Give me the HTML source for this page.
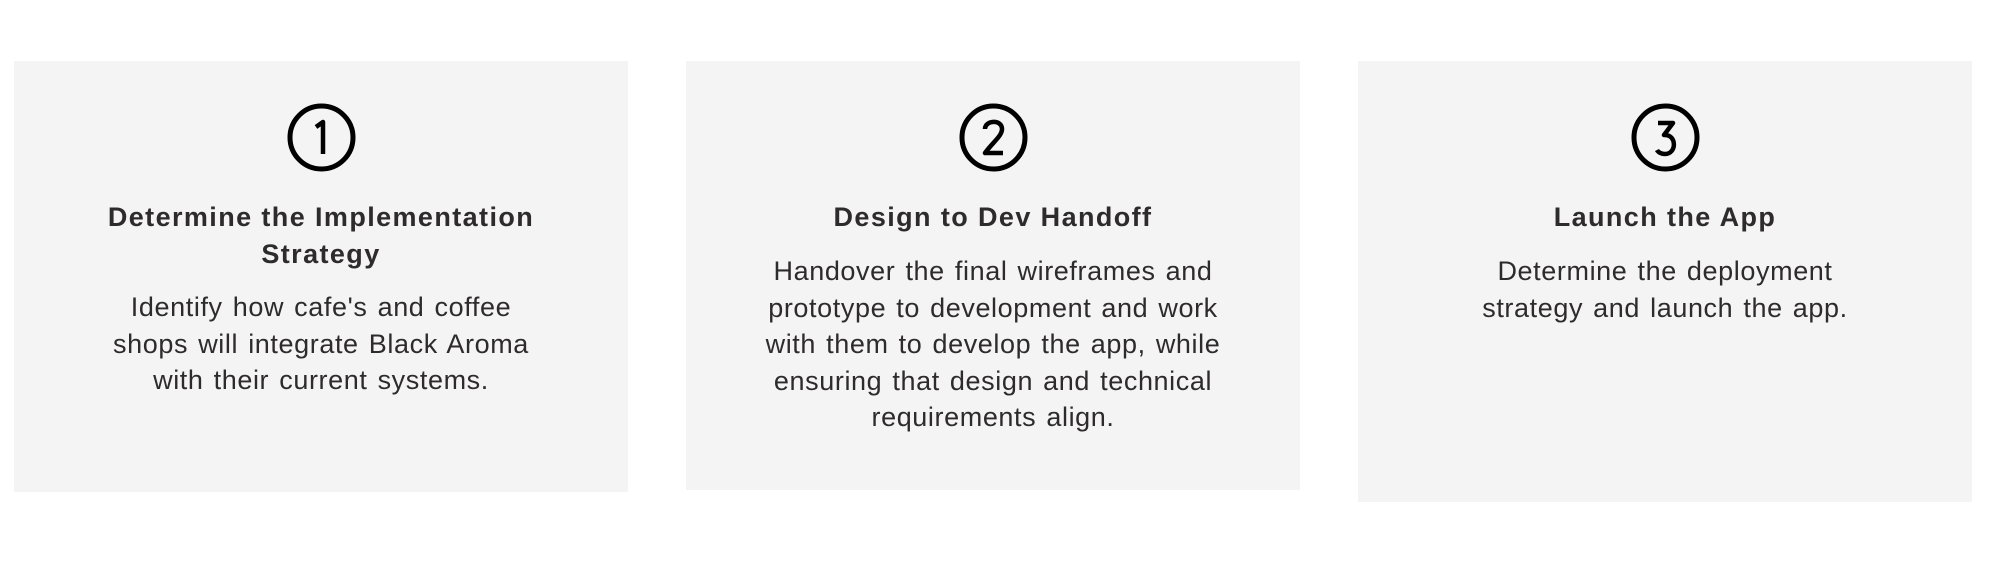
<!DOCTYPE html>
<html><head><meta charset="utf-8"><style>
html,body{margin:0;padding:0;background:#fff;width:1992px;height:562px;overflow:hidden;font-family:"Liberation Sans",sans-serif;color:#2e2b2c}
.card{position:absolute;top:61px;background:#f4f4f4;text-align:center}
.c{position:absolute;top:42px;left:50%;margin-left:-34px;width:69px;height:69px}
h3{position:absolute;top:138px;left:0;right:0;margin:0 auto;font-size:27px;line-height:37px;font-weight:bold;letter-spacing:1.4px;white-space:nowrap}
p{position:absolute;left:0;right:0;margin:0;font-size:27px;line-height:36.5px;letter-spacing:0.6px;word-spacing:2px;white-space:nowrap}
</style></head><body>
<div class="card" style="left:14px;width:614px;height:431px">
<svg class="c" viewBox="0 0 69 69"><circle cx="34.5" cy="34.5" r="31.5" fill="none" stroke="#000" stroke-width="5"/><path d="M29 24 L36 19 V51" fill="none" stroke="#000" stroke-width="4.5" stroke-linejoin="round"/></svg>
<h3>Determine the Implementation<br>Strategy</h3>
<p style="top:228px">Identify how cafe's and coffee<br>shops will integrate Black Aroma<br>with their current systems.</p>
</div>
<div class="card" style="left:686px;width:614px;height:429px">
<svg class="c" viewBox="0 0 69 69"><circle cx="34.5" cy="34.5" r="31.5" fill="none" stroke="#000" stroke-width="5"/><path d="M26 26 C26 17 43 16 43 26 C43 33 34 39 26 50 H44" fill="none" stroke="#000" stroke-width="4.5" stroke-linejoin="round"/></svg>
<h3>Design to Dev Handoff</h3>
<p style="top:192px">Handover the final wireframes and<br>prototype to development and work<br>with them to develop the app, while<br>ensuring that design and technical<br>requirements align.</p>
</div>
<div class="card" style="left:1358px;width:614px;height:441px">
<svg class="c" viewBox="0 0 69 69"><circle cx="34.5" cy="34.5" r="31.5" fill="none" stroke="#000" stroke-width="5"/><path d="M27 20 H42 L33 32 C46 31 46 51 34 51 C30 51 27 49 26 47" fill="none" stroke="#000" stroke-width="4.5" stroke-linejoin="round"/></svg>
<h3>Launch the App</h3>
<p style="top:192px">Determine the deployment<br>strategy and launch the app.</p>
</div>
</body></html>
